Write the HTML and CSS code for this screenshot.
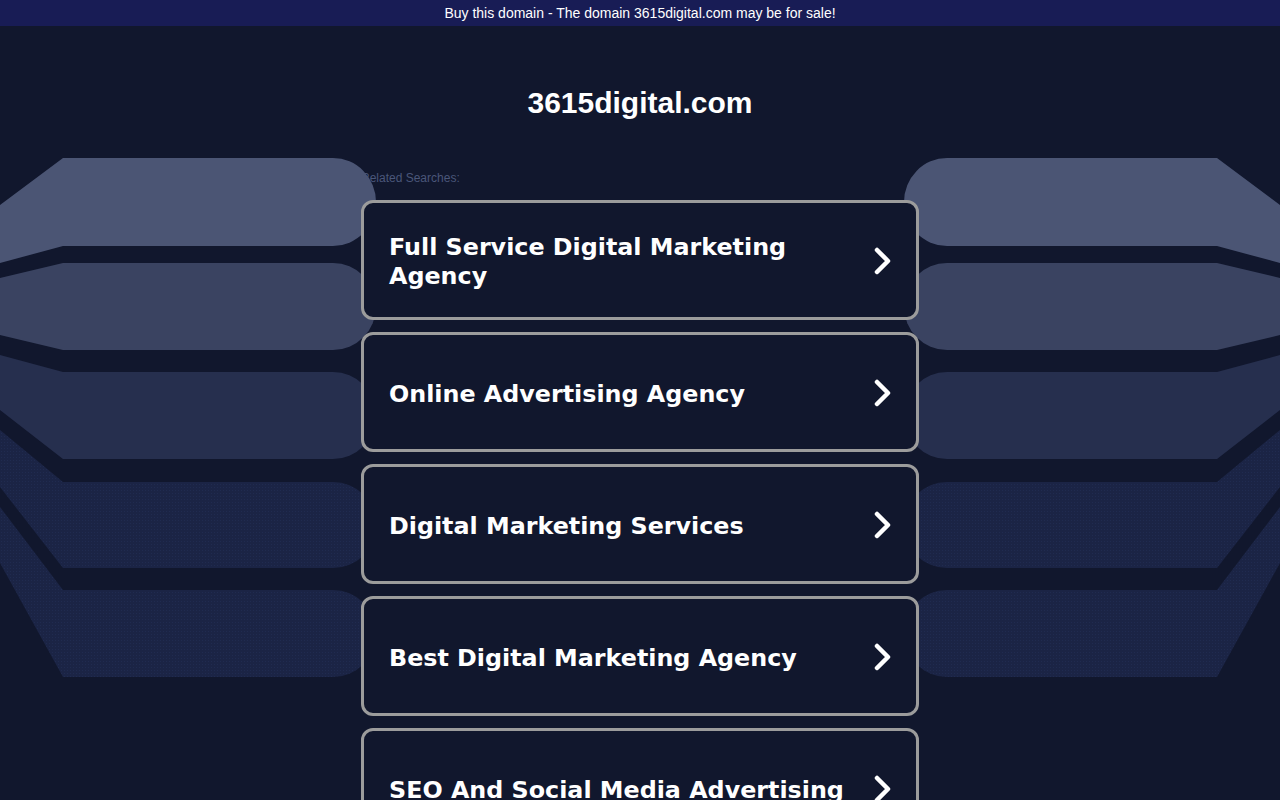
FILE: index.html
```html
<!DOCTYPE html>
<html lang="en">
<head>
<meta charset="utf-8">
<title>3615digital.com</title>
<link rel="stylesheet" href="styles.css">
</head>
<body>
<div class="topbar">Buy this domain - The domain 3615digital.com may be for sale!</div>

<svg class="bands" width="1280" height="800" viewBox="0 0 1280 800" aria-hidden="true">
  <defs>
    <pattern id="dots" width="3" height="3" patternUnits="userSpaceOnUse">
      <rect width="3" height="3" fill="#1b2445"/>
      <rect x="1" y="1" width="1" height="1" fill="#202b50"/>
    </pattern>
    <g id="side">
      <path fill="#4b5574" d="M0,205 L63,158 L333,158 A43,44 0 0 1 333,246 L63,246 L0,263 Z"/>
      <path fill="#3a4361" d="M0,278 L63,263 L333,263 A43,43.5 0 0 1 333,350 L63,350 L0,335 Z"/>
      <path fill="#262f4e" d="M0,355 L63,372 L333,372 A43,43.5 0 0 1 333,459 L63,459 L0,410 Z"/>
      <path fill="url(#dots)" d="M0,430 L63,482 L333,482 A43,43 0 0 1 333,568 L63,568 L0,487 Z"/>
      <path fill="url(#dots)" d="M0,507 L63,590 L333,590 A43,43.5 0 0 1 333,677 L63,677 L0,563 Z"/>
    </g>
  </defs>
  <use href="#side"/>
  <use href="#side" transform="translate(1280,0) scale(-1,1)"/>
</svg>

<main class="main">
  <h1 class="title">3615digital.com</h1>
  <div class="related">Related Searches:</div>
  <ul class="list">
    <li class="card"><span class="label">Full Service Digital Marketing Agency</span><svg class="chev" width="20" height="28" viewBox="0 0 20 28"><polyline points="5,3 16,14 5,25"/></svg></li>
    <li class="card"><span class="label">Online Advertising Agency</span><svg class="chev" width="20" height="28" viewBox="0 0 20 28"><polyline points="5,3 16,14 5,25"/></svg></li>
    <li class="card"><span class="label">Digital Marketing Services</span><svg class="chev" width="20" height="28" viewBox="0 0 20 28"><polyline points="5,3 16,14 5,25"/></svg></li>
    <li class="card"><span class="label">Best Digital Marketing Agency</span><svg class="chev" width="20" height="28" viewBox="0 0 20 28"><polyline points="5,3 16,14 5,25"/></svg></li>
    <li class="card"><span class="label">SEO And Social Media Advertising</span><svg class="chev" width="20" height="28" viewBox="0 0 20 28"><polyline points="5,3 16,14 5,25"/></svg></li>
  </ul>
</main>
</body>
</html>
```

FILE: styles.css
```css
html, body {
  margin: 0;
  padding: 0;
}
body {
  background: #11172d;
  color: #fff;
  font-family: "Liberation Sans", Arial, sans-serif;
  height: 800px;
  overflow: hidden;
  position: relative;
}
.topbar {
  height: 26px;
  line-height: 26px;
  background: #181c55;
  color: #fff;
  font-size: 14px;
  text-align: center;
  position: relative;
  z-index: 2;
}
.bands {
  position: absolute;
  left: 0;
  top: 0;
  width: 1280px;
  height: 800px;
}
.main {
  width: 558px;
  margin: 0 auto;
}
.title {
  margin: 59px 0 0;
  font-size: 30px;
  line-height: 36px;
  font-weight: bold;
  text-align: center;
  color: #fff;
  position: relative;
  z-index: 1;
}
.related {
  margin-top: 50px;
  font-size: 12px;
  line-height: 14px;
  color: #4a5679;
}
.list {
  list-style: none;
  margin: 15px 0 0;
  padding: 0;
  display: flex;
  flex-direction: column;
  gap: 12px;
  position: relative;
  z-index: 1;
}
.card {
  box-sizing: border-box;
  height: 120px;
  border: 3px solid #9c9c9c;
  border-radius: 12px;
  background: #11172d;
  display: flex;
  align-items: center;
  padding: 0 25px 0 25px;
  gap: 22px;
}
.label {
  flex: 1;
  padding-top: 4px;
  font-family: "DejaVu Sans", Verdana, sans-serif;
  font-weight: bold;
  font-size: 23.8px;
  line-height: 29px;
  color: #fff;
}
.chev {
  flex: none;
  display: block;
  margin: 2px -1px 0 0;
}
.chev polyline {
  fill: none;
  stroke: #fff;
  stroke-width: 4.5;
  stroke-linecap: round;
  stroke-linejoin: round;
}
```
